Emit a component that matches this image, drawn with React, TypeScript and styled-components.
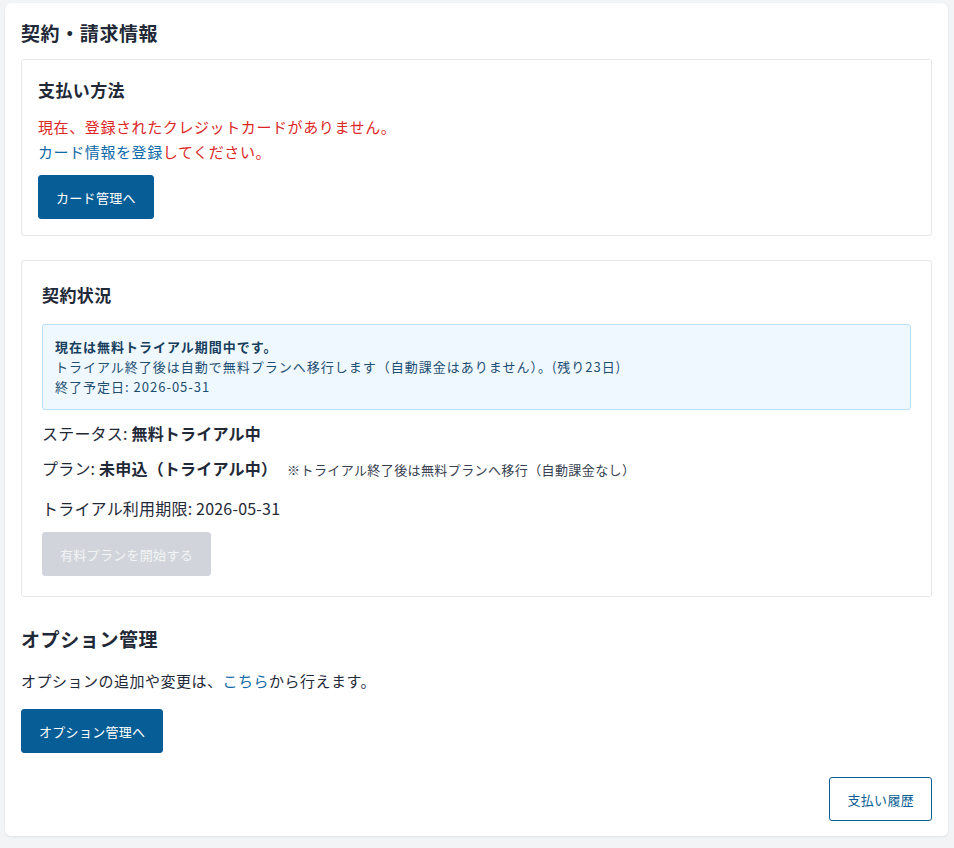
import React from "react";
import styled, { createGlobalStyle } from "styled-components";

const Global = createGlobalStyle`
  html, body { margin: 0; padding: 0; background: #f3f4f6; }
  body { font-family: "Noto Sans CJK JP", "Noto Sans", sans-serif; color: #1f2937; }
`;

const Page = styled.div`
  padding: 3px 6px 8px 5px;
`;

const Card = styled.div`
  background: #fff;
  border-radius: 6px;
  box-shadow: 0 1px 3px rgba(0,0,0,0.08);
  padding: 16px 16px 15px;
  display: flex;
  flex-direction: column;
`;

const Title = styled.h1<{ $mt?: number }>`
  margin: ${p => p.$mt ?? 0}px 0 0;
  font-size: 19px;
  letter-spacing: 0.6px;
  font-weight: 700;
  line-height: 28px;
  color: #1f2937;
`;

const Section = styled.div<{ $pad: number; $mt: number; $pb: number }>`
  border: 1px solid #e5e7eb;
  border-radius: 3px;
  padding: ${p => p.$pad}px ${p => p.$pad}px ${p => p.$pb}px;
  margin-top: ${p => p.$mt}px;
  display: flex;
  flex-direction: column;
  align-items: flex-start;
`;

const SubTitle = styled.h2`
  margin: 0;
  font-size: 17px;
  letter-spacing: 0.4px;
  font-weight: 700;
  line-height: 28px;
  color: #1f2937;
`;

const Msg = styled.p<{ $mt?: number }>`
  margin: ${p => p.$mt ?? 0}px 0 0;
  font-size: 15px;
  letter-spacing: 0.6px;
  line-height: 25px;
  color: #dc2626;
`;

const Link = styled.span`
  color: #0e6aa8;
`;

const Button = styled.button<{ $variant?: "primary" | "disabled" | "outline"; $mt: number }>`
  margin-top: ${p => p.$mt}px;
  height: 44px;
  padding: 0 17px;
  border-radius: 3px;
  font-family: inherit;
  font-size: 13px;
  letter-spacing: 0.3px;
  border: 1px solid ${p => p.$variant === "outline" ? "#0b5f95" : p.$variant === "disabled" ? "#d1d5db" : "#075e96"};
  background: ${p => p.$variant === "outline" ? "#fff" : p.$variant === "disabled" ? "#d1d5db" : "#075e96"};
  color: ${p => p.$variant === "outline" ? "#0b5f95" : p.$variant === "disabled" ? "#f3f4f6" : "#fff"};
`;

const Info = styled.div`
  margin-top: 15px;
  align-self: stretch;
  background: #eef8fe;
  border: 1px solid #b6e1f6;
  border-radius: 3px;
  padding: 12px;
  font-size: 13px;
  letter-spacing: 1px;
  line-height: 20px;
  color: #1e4f73;
`;

const InfoStrong = styled.div`
  font-weight: 700;
  color: #173e5d;
`;

const Row = styled.div<{ $mt: number }>`
  margin-top: ${p => p.$mt}px;
  font-size: 16px;
  letter-spacing: 0.2px;
  line-height: 24px;
  color: #1f2937;
  display: flex;
  align-items: baseline;
`;

const Strong = styled.b`
  font-weight: 700;
`;

const Note = styled.span`
  font-size: 13px;
  letter-spacing: 0.4px;
  color: #374151;
  margin-left: 10px;
`;

const Text = styled.p`
  margin: 16px 0 0;
  font-size: 15px;
  letter-spacing: 0.5px;
  line-height: 24px;
  color: #1f2937;
`;

const Footer = styled.div`
  display: flex;
  justify-content: flex-end;
`;

const Left = styled.div`
  display: flex;
`;

export default function App() {
  return (
    <Page>
      <Global />
      <Card>
        <Title>契約・請求情報</Title>
        <Section $pad={16} $mt={12} $pb={16}>
          <SubTitle>支払い方法</SubTitle>
          <Msg $mt={10}>現在、登録されたクレジットカードがありません。</Msg>
          <Msg><Link>カード情報を登録</Link>してください。</Msg>
          <Button $mt={11} $variant="primary">カード管理へ</Button>
        </Section>
        <Section $pad={20} $mt={24} $pb={20}>
          <SubTitle>契約状況</SubTitle>
          <Info>
            <InfoStrong>現在は無料トライアル期間中です。</InfoStrong>
            <div>トライアル終了後は自動で無料プランへ移行します（自動課金はありません）。(残り23日)</div>
            <div>終了予定日: 2026-05-31</div>
          </Info>
          <Row $mt={11}>ステータス:&nbsp;<Strong>無料トライアル中</Strong></Row>
          <Row $mt={11}>プラン:&nbsp;<Strong>未申込（トライアル中）</Strong><Note>※トライアル終了後は無料プランへ移行（自動課金なし）</Note></Row>
          <Row $mt={14}>トライアル利用期限: 2026-05-31</Row>
          <Button $mt={12} $variant="disabled">有料プランを開始する</Button>
        </Section>
        <Title $mt={28}>オプション管理</Title>
        <Text>オプションの追加や変更は、<Link>こちら</Link>から行えます。</Text>
        <Left><Button $mt={16} $variant="primary">オプション管理へ</Button></Left>
        <Footer><Button $mt={24} $variant="outline">支払い履歴</Button></Footer>
      </Card>
    </Page>
  );
}
